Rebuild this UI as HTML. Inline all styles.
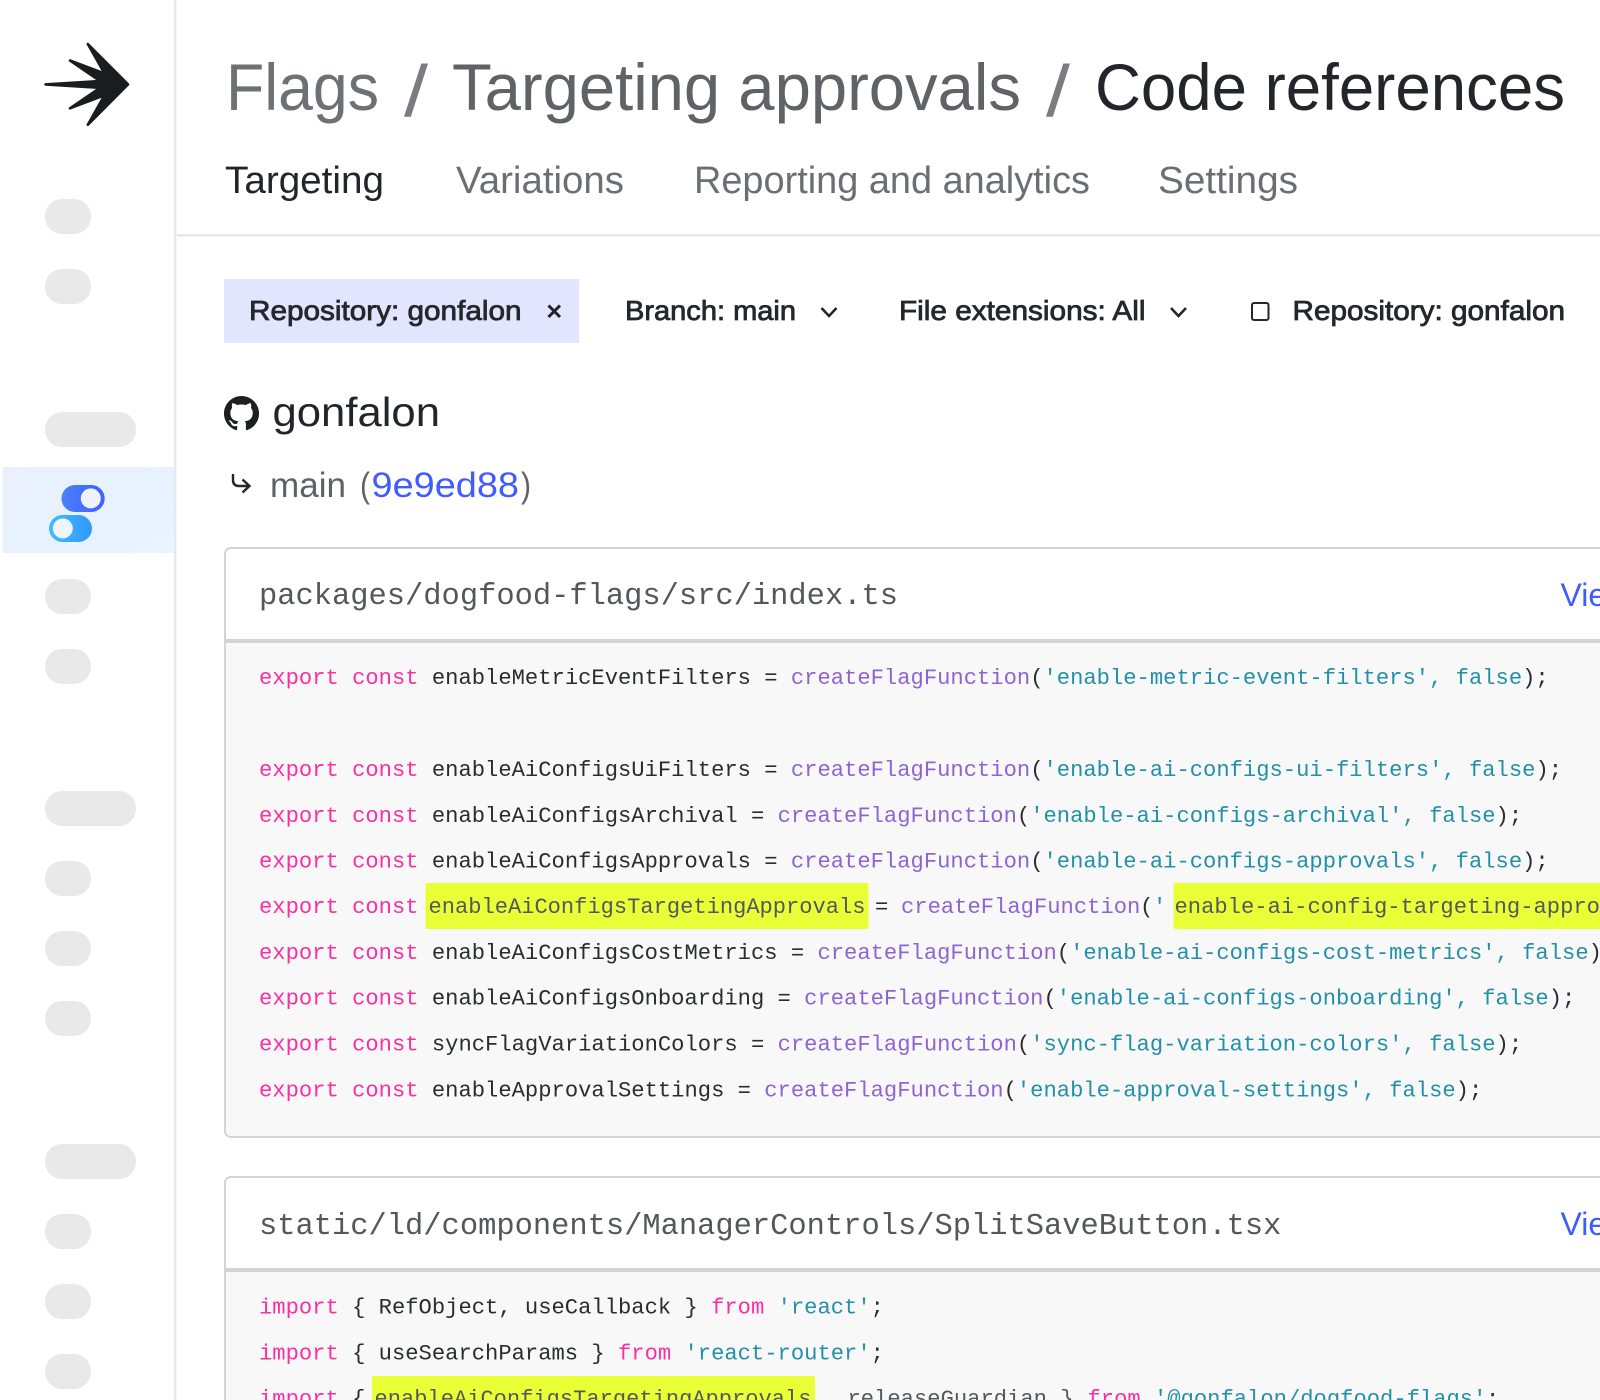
<!DOCTYPE html>
<html lang="en">
<head>
<meta charset="utf-8">
<title>Code references</title>
<style>
html,body{margin:0;padding:0;background:#fff;width:1600px;height:1400px;overflow:hidden}
svg{display:block}
text{font-family:"Liberation Sans",sans-serif;white-space:pre}
.m{font-family:"Liberation Mono",monospace;font-size:22.16px;fill:#2a2c30}
.p{fill:#fb2fa3}.f{fill:#8e64d2}.s{fill:#2290a9}.h{fill:#55575c}
.hd{font-family:"Liberation Mono",monospace;font-size:30.43px;fill:#55575c}
.md{font-size:28px;fill:#25272c;stroke:#25272c;stroke-width:.8px}
</style>
</head>
<body>
<svg xmlns="http://www.w3.org/2000/svg" width="1600" height="1400" viewBox="0 0 1600 1400">
<defs>
<linearGradient id="sel" x1="0" y1="0" x2="1" y2="1"><stop offset="0" stop-color="#e9effe"/><stop offset="1" stop-color="#e8f4ff"/></linearGradient>
<linearGradient id="t1" x1="0" y1="0" x2="1" y2="0"><stop offset="0" stop-color="#4a80fd"/><stop offset="1" stop-color="#3d60fc"/></linearGradient>
<linearGradient id="t2" x1="0" y1="0" x2="1" y2="0"><stop offset="0" stop-color="#3fbcfe"/><stop offset="1" stop-color="#3497fd"/></linearGradient>
</defs>
<rect width="1600" height="1400" fill="#fff"/>

<!-- sidebar -->
<rect x="174" y="0" width="2.4" height="1400" fill="#e8e9ea"/>
<rect x="177" y="234" width="1423" height="2.6" fill="#e8e9ea"/>
<path fill="#1b1c1f" stroke="#1b1c1f" stroke-width="2.6" stroke-linejoin="round" d="M128 84.4 L87.8 44 L104.5 73.5 L70 60.5 L100 81 L45.5 84.4 L100 87.8 L70 108.3 L104.5 95.3 L87.8 124.8 Z"/>

<g fill="#e9e9e9">
<rect x="45" y="199" width="46" height="35" rx="17"/>
<rect x="45" y="269" width="46" height="35" rx="17"/>
<rect x="45" y="412" width="91" height="35" rx="17"/>
<rect x="45" y="579" width="46" height="35" rx="17"/>
<rect x="45" y="649" width="46" height="35" rx="17"/>
<rect x="45" y="791" width="91" height="35" rx="17"/>
<rect x="45" y="861" width="46" height="35" rx="17"/>
<rect x="45" y="931" width="46" height="35" rx="17"/>
<rect x="45" y="1001" width="46" height="35" rx="17"/>
<rect x="45" y="1144" width="91" height="35" rx="17"/>
<rect x="45" y="1214" width="46" height="35" rx="17"/>
<rect x="45" y="1284" width="46" height="35" rx="17"/>
<rect x="45" y="1354" width="46" height="35" rx="17"/>
</g>

<rect x="2.5" y="467" width="171.5" height="86" fill="url(#sel)"/>
<rect x="61.5" y="485" width="43.2" height="27" rx="13.5" fill="url(#t1)"/>
<circle cx="90.8" cy="498.4" r="10" fill="#eef2fc"/>
<rect x="49" y="515" width="43" height="27" rx="13.5" fill="url(#t2)"/>
<circle cx="62.8" cy="528.4" r="10" fill="#eef5fd"/>

<!-- title -->
<text x="226" y="110" font-size="66" fill="#6e7075" textLength="153" lengthAdjust="spacingAndGlyphs">Flags</text>
<text x="404" y="116" font-size="72" fill="#7a7c81" textLength="24" lengthAdjust="spacingAndGlyphs">/</text>
<text x="452" y="110" font-size="66" fill="#606267" textLength="569" lengthAdjust="spacingAndGlyphs">Targeting approvals</text>
<text x="1046" y="116" font-size="72" fill="#7a7c81" textLength="24" lengthAdjust="spacingAndGlyphs">/</text>
<text x="1095" y="110" font-size="66" fill="#23252a" textLength="470" lengthAdjust="spacingAndGlyphs">Code references</text>

<!-- tabs -->
<text x="225" y="193" font-size="38" fill="#23252a" textLength="159" lengthAdjust="spacingAndGlyphs">Targeting</text>
<text x="456" y="193" font-size="38" fill="#6c6e74" textLength="168" lengthAdjust="spacingAndGlyphs">Variations</text>
<text x="694" y="193" font-size="38" fill="#6c6e74" textLength="396" lengthAdjust="spacingAndGlyphs">Reporting and analytics</text>
<text x="1158" y="193" font-size="38" fill="#6c6e74" textLength="140" lengthAdjust="spacingAndGlyphs">Settings</text>

<!-- filters -->
<rect x="224" y="279" width="355" height="64" fill="#e1e5fd"/>
<text class="md" x="249" y="320" textLength="272.5" lengthAdjust="spacingAndGlyphs">Repository: gonfalon</text>
<path d="M548.5 305.5 L560 317 M560 305.5 L548.5 317" stroke="#1f2125" stroke-width="3" fill="none"/>
<text class="md" x="625" y="320" textLength="171" lengthAdjust="spacingAndGlyphs">Branch: main</text>
<path d="M821.5 308 L829 316 L836.5 308" stroke="#25272c" stroke-width="2.6" fill="none"/>
<text class="md" x="899" y="320" textLength="246.5" lengthAdjust="spacingAndGlyphs">File extensions: All</text>
<path d="M1171 308 L1178.5 316 L1186 308" stroke="#25272c" stroke-width="2.6" fill="none"/>
<rect x="1252" y="303" width="16.5" height="17" rx="2" fill="none" stroke="#25272c" stroke-width="2"/>
<text class="md" x="1292.5" y="320" textLength="272.5" lengthAdjust="spacingAndGlyphs">Repository: gonfalon</text>

<!-- repo heading -->
<g transform="translate(224 396) scale(2.19)"><path fill="#1d1f23" d="M8 0C3.58 0 0 3.58 0 8c0 3.54 2.29 6.53 5.47 7.59.4.07.55-.17.55-.38 0-.19-.01-.82-.01-1.49-2.01.37-2.53-.49-2.69-.94-.09-.23-.48-.94-.82-1.13-.28-.15-.68-.52-.01-.53.63-.01 1.08.58 1.23.82.72 1.21 1.87.87 2.33.66.07-.52.28-.87.51-1.07-1.78-.2-3.64-.89-3.64-3.95 0-.87.31-1.59.82-2.15-.08-.2-.36-1.02.08-2.12 0 0 .67-.21 2.2.82.64-.18 1.32-.27 2-.27.68 0 1.36.09 2 .27 1.53-1.04 2.2-.82 2.2-.82.44 1.1.16 1.92.08 2.12.51.56.82 1.27.82 2.15 0 3.07-1.87 3.75-3.65 3.95.29.25.54.73.54 1.48 0 1.07-.01 1.93-.01 2.2 0 .21.15.46.55.38A8.013 8.013 0 0016 8c0-4.42-3.58-8-8-8z"/></g>
<text x="272.5" y="426" font-size="41" fill="#23252a" textLength="167.5" lengthAdjust="spacingAndGlyphs">gonfalon</text>

<path d="M233 474 V480 Q233 486 239 486 H249 M242.5 479.5 L249.5 486 L242.5 492.5" fill="none" stroke="#23252a" stroke-width="2.4"/>
<text x="270" y="497" font-size="35" fill="#5f6167" textLength="76" lengthAdjust="spacingAndGlyphs">main</text>
<text x="360" y="497" font-size="35" fill="#5f6167" textLength="10" lengthAdjust="spacingAndGlyphs">(</text>
<text x="371.5" y="497" font-size="35" fill="#405bff" textLength="147.5" lengthAdjust="spacingAndGlyphs">9e9ed88</text>
<text x="521" y="497" font-size="35" fill="#5f6167" textLength="10" lengthAdjust="spacingAndGlyphs">)</text>

<!-- card 1 -->
<rect x="225" y="548" width="1400" height="589" rx="6" fill="#fff" stroke="#d3d4d7" stroke-width="2"/>
<path d="M226 642 H1600 V1136 H232 Q226 1136 226 1130 Z" fill="#f8f8f8"/>
<rect x="226" y="639" width="1374" height="4" fill="#d1d3d6"/>
<text class="hd" x="259" y="604">packages/dogfood-flags/src/index.ts</text>
<text x="1560.5" y="606" font-size="32" fill="#405bff">View</text>

<text class="m" y="684.2" x="259"><tspan class="p">export const</tspan> enableMetricEventFilters = <tspan class="f">createFlagFunction</tspan>(<tspan class="s">'enable-metric-event-filters', false</tspan>);</text>
<text class="m" y="776.2" x="259"><tspan class="p">export const</tspan> enableAiConfigsUiFilters = <tspan class="f">createFlagFunction</tspan>(<tspan class="s">'enable-ai-configs-ui-filters', false</tspan>);</text>
<text class="m" y="822" x="259"><tspan class="p">export const</tspan> enableAiConfigsArchival = <tspan class="f">createFlagFunction</tspan>(<tspan class="s">'enable-ai-configs-archival', false</tspan>);</text>
<text class="m" y="867.7" x="259"><tspan class="p">export const</tspan> enableAiConfigsApprovals = <tspan class="f">createFlagFunction</tspan>(<tspan class="s">'enable-ai-configs-approvals', false</tspan>);</text>

<rect x="425.5" y="883" width="443" height="46" rx="2" fill="#e9ff36"/>
<rect x="1173.5" y="883" width="430" height="46" rx="2" fill="#e9ff36"/>
<text class="m p" y="913" x="259">export const</text>
<text class="m h" y="913" x="428.5" textLength="437" lengthAdjust="spacingAndGlyphs">enableAiConfigsTargetingApprovals</text>
<text class="m" y="913" x="875">=</text>
<text class="m f" y="913" x="901">createFlagFunction</text>
<text class="m" y="913" x="1140">(</text>
<text class="m s" y="913" x="1153">'</text>
<text class="m h" y="913" x="1174.5">enable-ai-config-targeting-approvals</text>

<text class="m" y="958.8" x="259"><tspan class="p">export const</tspan> enableAiConfigsCostMetrics = <tspan class="f">createFlagFunction</tspan>(<tspan class="s">'enable-ai-configs-cost-metrics', false</tspan>);</text>
<text class="m" y="1004.5" x="259"><tspan class="p">export const</tspan> enableAiConfigsOnboarding = <tspan class="f">createFlagFunction</tspan>(<tspan class="s">'enable-ai-configs-onboarding', false</tspan>);</text>
<text class="m" y="1050.3" x="259"><tspan class="p">export const</tspan> syncFlagVariationColors = <tspan class="f">createFlagFunction</tspan>(<tspan class="s">'sync-flag-variation-colors', false</tspan>);</text>
<text class="m" y="1096.5" x="259"><tspan class="p">export const</tspan> enableApprovalSettings = <tspan class="f">createFlagFunction</tspan>(<tspan class="s">'enable-approval-settings', false</tspan>);</text>

<!-- card 2 -->
<rect x="225" y="1177" width="1400" height="240" rx="6" fill="#fff" stroke="#d3d4d7" stroke-width="2"/>
<rect x="226" y="1271" width="1374" height="129" fill="#f8f8f8"/>
<rect x="226" y="1268" width="1374" height="4" fill="#d1d3d6"/>
<text class="hd" x="259" y="1234">static/ld/components/ManagerControls/SplitSaveButton.tsx</text>
<text x="1560.5" y="1235" font-size="32" fill="#405bff">View</text>

<text class="m" y="1313.3" x="259"><tspan class="p">import</tspan> { RefObject, useCallback } <tspan class="p">from</tspan> <tspan class="s">'react'</tspan>;</text>
<text class="m" y="1359.3" x="259"><tspan class="p">import</tspan> { useSearchParams } <tspan class="p">from</tspan> <tspan class="s">'react-router'</tspan>;</text>
<rect x="372" y="1376" width="443" height="30" rx="2" fill="#e9ff36"/>
<text class="m" y="1405" x="259"><tspan class="p">import</tspan> {</text>
<text class="m h" y="1405" x="374.5" textLength="437" lengthAdjust="spacingAndGlyphs">enableAiConfigsTargetingApprovals</text>
<text class="m h" y="1405" x="847.5">releaseGuardian }</text>
<text class="m p" y="1405" x="1087.5">from</text>
<text class="m s" y="1405" x="1154">'@gonfalon/dogfood-flags'</text>
<text class="m" y="1405" x="1486">;</text>
</svg>
</body>
</html>
